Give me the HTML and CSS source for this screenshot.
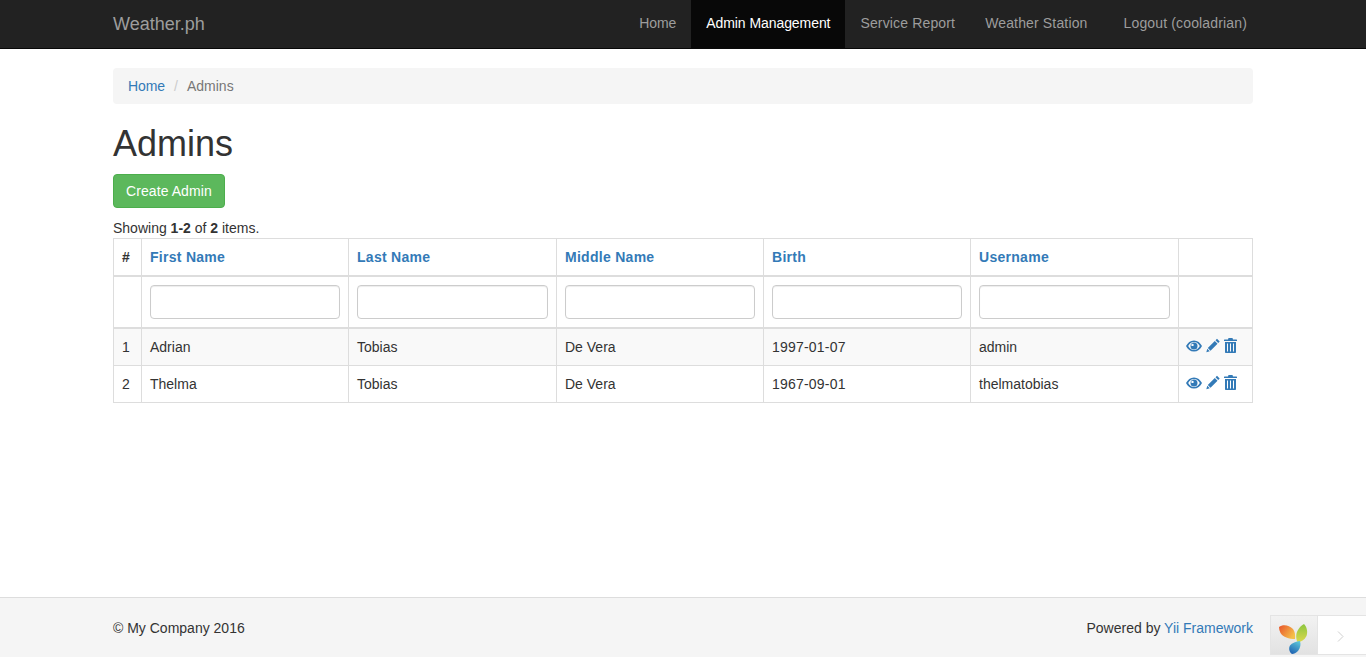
FILE: index.html
```html
<!DOCTYPE html>
<html lang="en">
<head>
  <meta charset="UTF-8">
  <title>Admins</title>
  <link rel="stylesheet" href="styles.css">
</head>
<body>

<nav class="navbar">
  <div class="container navbar-inner">
    <a class="brand" href="#">Weather.ph</a>
    <ul class="nav">
      <li class="tight"><a href="#">Home</a></li>
      <li class="tight active"><a href="#">Admin Management</a></li>
      <li class="wide"><a href="#">Service Report</a></li>
      <li class="wide"><a href="#">Weather Station</a></li>
      <li class="wide logout"><a href="#">Logout (cooladrian)</a></li>
    </ul>
  </div>
</nav>

<main class="container content">
  <ul class="breadcrumb">
    <li class="tight"><a href="#">Home</a></li>
    <li class="sep">/</li>
    <li class="current">Admins</li>
  </ul>

  <h1>Admins</h1>
  <p class="actions"><a class="btn-success" href="#">Create Admin</a></p>

  <div class="summary">Showing <b>1-2</b> of <b>2</b> items.</div>
  <table class="grid">
    <colgroup>
      <col class="col-num">
      <col class="col-a">
      <col class="col-b">
      <col class="col-a">
      <col class="col-a">
      <col class="col-b">
      <col class="col-actions">
    </colgroup>
    <thead>
      <tr>
        <th>#</th>
        <th><a href="#">First Name</a></th>
        <th><a href="#">Last Name</a></th>
        <th><a href="#">Middle Name</a></th>
        <th><a href="#">Birth</a></th>
        <th><a href="#">Username</a></th>
        <th></th>
      </tr>
      <tr class="filters">
        <td></td>
        <td><input type="text"></td>
        <td><input type="text"></td>
        <td><input type="text"></td>
        <td><input type="text"></td>
        <td><input type="text"></td>
        <td></td>
      </tr>
    </thead>
    <tbody>
      <tr class="odd">
        <td>1</td>
        <td>Adrian</td>
        <td>Tobias</td>
        <td>De Vera</td>
        <td class="date">1997-01-07</td>
        <td>admin</td>
        <td class="row-icons">
          <a href="#"><svg class="icon-eye" viewBox="0 1 16 12"><path fill-rule="evenodd" d="M8 1.400C4.400 1.400 1.600 3.800 0 7c1.600 3.200 4.400 5.600 8 5.600s6.400-2.400 8-5.600c-1.600-3.200-4.400-5.600-8-5.600zM8 3c3 0 4.600 2 5.800 4-1.200 2-2.800 4-5.800 4S3.400 9 2.200 7C3.400 5 5 3 8 3z"/><path fill-rule="evenodd" d="M8 3.500a3.500 3.500 0 1 0 0 7 3.500 3.500 0 0 0 0-7zM6.500 4.700a1.200 1.200 0 1 1 0 2.400 1.200 1.200 0 0 1 0-2.400z"/></svg></a>
          <a href="#"><svg class="icon-pencil" viewBox="0 0 14 14"><path d="M11 .3l2.700 2.700-1.500 1.500-2.700-2.700zM8.800 2.500l2.700 2.700-7 7-2.700-2.700zM1.300 10.200l2.500 2.500-3.500 1z"/></svg></a>
          <a href="#"><svg class="icon-trash" viewBox="0 0 13 15"><path fill-rule="evenodd" d="M4.500 0h4l.5 1.500h3.500c.3 0 .5.200.5.500v1H0V2c0-.3.200-.5.500-.5H4zM1 4h11v10c0 .6-.4 1-1 1H2c-.6 0-1-.4-1-1zM3 5.500v8h1v-8zM6 5.500v8h1v-8zM9 5.500v8h1v-8z"/></svg></a>
        </td>
      </tr>
      <tr>
        <td>2</td>
        <td>Thelma</td>
        <td>Tobias</td>
        <td>De Vera</td>
        <td class="date">1967-09-01</td>
        <td>thelmatobias</td>
        <td class="row-icons">
          <a href="#"><svg class="icon-eye" viewBox="0 1 16 12"><path fill-rule="evenodd" d="M8 1.400C4.400 1.400 1.600 3.800 0 7c1.600 3.200 4.400 5.600 8 5.600s6.400-2.400 8-5.600c-1.600-3.200-4.400-5.600-8-5.600zM8 3c3 0 4.600 2 5.800 4-1.200 2-2.800 4-5.800 4S3.400 9 2.200 7C3.400 5 5 3 8 3z"/><path fill-rule="evenodd" d="M8 3.500a3.500 3.500 0 1 0 0 7 3.500 3.500 0 0 0 0-7zM6.500 4.700a1.200 1.200 0 1 1 0 2.400 1.200 1.200 0 0 1 0-2.400z"/></svg></a>
          <a href="#"><svg class="icon-pencil" viewBox="0 0 14 14"><path d="M11 .3l2.700 2.700-1.500 1.500-2.700-2.700zM8.800 2.500l2.700 2.700-7 7-2.700-2.700zM1.300 10.200l2.500 2.500-3.500 1z"/></svg></a>
          <a href="#"><svg class="icon-trash" viewBox="0 0 13 15"><path fill-rule="evenodd" d="M4.500 0h4l.5 1.500h3.500c.3 0 .5.200.5.500v1H0V2c0-.3.200-.5.500-.5H4zM1 4h11v10c0 .6-.4 1-1 1H2c-.6 0-1-.4-1-1zM3 5.500v8h1v-8zM6 5.500v8h1v-8zM9 5.500v8h1v-8z"/></svg></a>
        </td>
      </tr>
    </tbody>
  </table>
</main>

<footer class="footer">
  <div class="container footer-inner">
    <span>&copy; My Company 2016</span>
    <span>Powered by <a href="#">Yii Framework</a></span>
  </div>
</footer>

<div class="debug-toolbar">
  <div class="debug-logo">
    <svg viewBox="0 0 30 30" width="30" height="30">
      <defs>
        <linearGradient id="petalOrange" x1="0" y1="0" x2="1" y2="0.6">
          <stop offset="0" stop-color="#e8532a"/>
          <stop offset="1" stop-color="#f5c04a"/>
        </linearGradient>
        <linearGradient id="petalGreen" x1="0.5" y1="0" x2="0.5" y2="1">
          <stop offset="0" stop-color="#8cc63f"/>
          <stop offset="1" stop-color="#dbd84c"/>
        </linearGradient>
        <linearGradient id="petalBlue" x1="0.7" y1="0" x2="0.2" y2="1">
          <stop offset="0" stop-color="#5cc3d8"/>
          <stop offset="1" stop-color="#1c5fb0"/>
        </linearGradient>
      </defs>
      <path fill="url(#petalOrange)" d="M0 3C4 0 10 1 14 5c2 3 2.500 6 2 10C10 15 4 13 1.500 9 .5 7 0 5 0 3z"/>
      <path fill="url(#petalGreen)" d="M25 0c3 3 4 8 2.500 12-2 4-5.500 6-9 6-2-4-1.500-9 .5-12 1.500-3 4-5 6-6z"/>
      <path fill="url(#petalBlue)" d="M21 17c1 3 .5 7-2 10-2 2-4 3-6 3-3-2-3.500-6-2-8.500 2-2.500 6-4 10-4.500z"/>
    </svg>
  </div>
  <div class="debug-toggle">
    <svg viewBox="0 0 7 11" width="7" height="11"><path d="M1 .5l5 5-5 5" fill="none" stroke="#cfcfcf" stroke-width="1"/></svg>
  </div>
</div>

</body>
</html>
```

FILE: styles.css
```css
* {
  box-sizing: border-box;
}
html, body {
  height: 100%;
}
body {
  margin: 0;
  display: flex;
  flex-direction: column;
  min-height: 657px;
  font-family: "Liberation Sans", Arial, sans-serif;
  font-size: 14px;
  line-height: 20px;
  color: #333;
  background: #fff;
}
a {
  color: #337ab7;
  text-decoration: none;
}
.container {
  width: 1170px;
  margin: 0 auto;
  padding: 0 15px;
}
.tight {
  letter-spacing: -.07px;
}
.wide {
  letter-spacing: .15px;
}

/* top bar */
.navbar {
  flex: none;
  height: 49px;
  background: #222;
  border-bottom: 1px solid #080808;
}
.navbar-inner {
  display: flex;
  justify-content: space-between;
}
.brand {
  font-size: 18px;
  line-height: 20px;
  padding: 14px 0;
  color: #9d9d9d;
}
.nav {
  display: flex;
  list-style: none;
  margin: 0 -15px 0 0;
  padding: 0;
}
.nav a {
  display: block;
  height: 48px;
  padding: 13px 15px;
  color: #9d9d9d;
}
.nav .active a {
  color: #fff;
  background: #080808;
}
.nav .logout a {
  padding: 13px 21px;
}

/* page */
.content {
  flex: 1;
  padding-top: 19px;
}
.breadcrumb {
  display: flex;
  list-style: none;
  height: 36px;
  margin: 0 0 20px;
  padding: 8px 15px;
  background: #f5f5f5;
  border-radius: 4px;
}
.breadcrumb .sep {
  padding: 0 9px;
  color: #ccc;
}
.breadcrumb .current {
  color: #777;
}
h1 {
  margin: 20px 0 10px;
  font-size: 36px;
  font-weight: 500;
  line-height: 39.6px;
}
.actions {
  margin: 0 0 10px;
}
.btn-success {
  display: inline-block;
  height: 34px;
  padding: 6px 12px;
  color: #fff;
  letter-spacing: .08px;
  background: #5cb85c;
  border: 1px solid #4cae4c;
  border-radius: 4px;
}

/* table */
.grid {
  width: 1139px;
  table-layout: fixed;
  border-collapse: collapse;
}
.col-num { width: 28px; }
.col-a { width: 207px; }
.col-b { width: 208px; }
.col-actions { width: 74px; }
.grid th,
.grid td {
  padding: 8px;
  border: 1px solid #ddd;
  text-align: left;
  vertical-align: top;
}
.grid thead th {
  border-bottom-width: 2px;
}
.grid th a {
  letter-spacing: .28px;
}
.filters td {
  border-bottom-width: 2px;
}
.odd td {
  background: #f9f9f9;
}
.date {
  letter-spacing: .2px;
}
.grid input {
  display: block;
  width: 100%;
  height: 34px;
  padding: 6px 12px;
  background: #fff;
  border: 1px solid #ccc;
  border-radius: 4px;
  box-shadow: inset 0 1px 1px rgba(0, 0, 0, .075);
}
.grid .row-icons {
  padding: 9px 0 0 7px;
  white-space: nowrap;
  font-size: 0;
}
.row-icons a {
  margin-right: 4px;
}
.row-icons svg {
  height: 15px;
  fill: #337ab7;
  vertical-align: top;
}
.row-icons .icon-eye {
  width: 16px;
  height: 14px;
  margin-top: 1px;
}
.icon-pencil { width: 14px; }
.icon-trash { width: 13px; }

/* footer */
.footer {
  flex: none;
  height: 60px;
  padding-top: 20px;
  background: #f5f5f5;
  border-top: 1px solid #ddd;
}
.footer-inner {
  display: flex;
  justify-content: space-between;
}

/* yii debug bar, sits over the footer */
.debug-toolbar {
  position: absolute;
  right: 0;
  bottom: 2px;
  display: flex;
  width: 96px;
  height: 40px;
  background: #fff;
  border: 1px solid #e4e4e4;
  border-right: 0;
}
.debug-logo {
  display: flex;
  align-items: center;
  justify-content: center;
  width: 47px;
  padding-top: 7px;
  background: linear-gradient(to bottom, #f2f2f2, #e2e2e2);
  border-right: 1px solid #e4e4e4;
}
.debug-toggle {
  flex: 1;
  display: flex;
  align-items: center;
  justify-content: center;
  padding: 3px 4px 0 0;
}
```
